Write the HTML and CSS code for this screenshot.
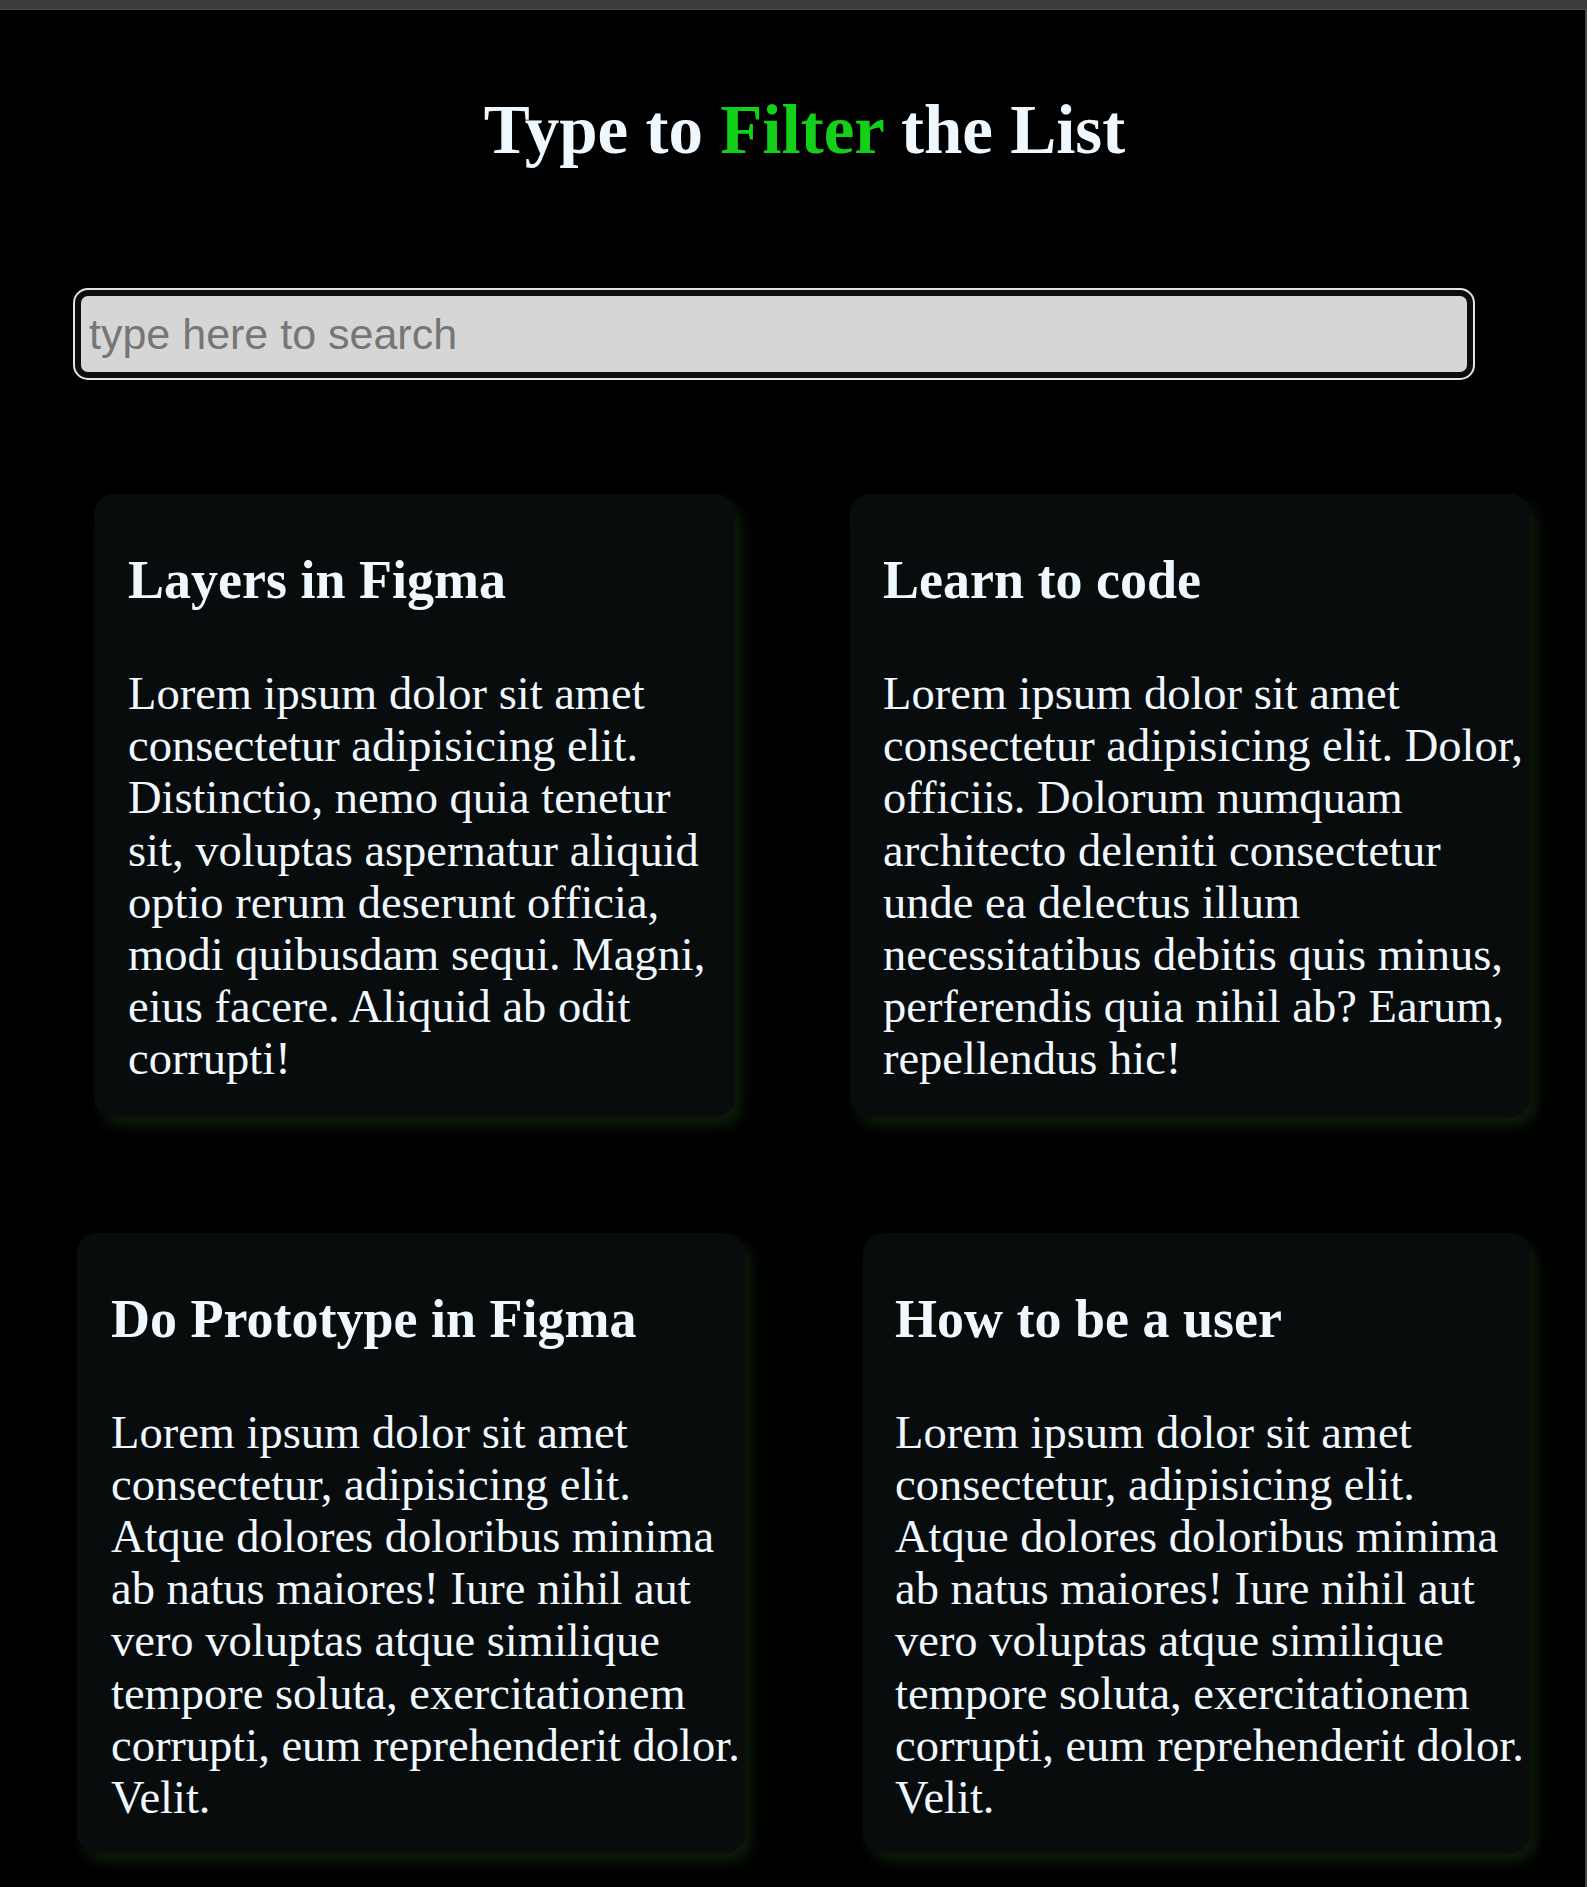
FILE: index.html
```html
<!DOCTYPE html>
<html lang="en">
<head>
<meta charset="utf-8">
<title>Type to Filter the List</title>
<link rel="stylesheet" href="styles.css">
</head>
<body>
<div class="topbar"></div>
<main class="page">
  <h1 class="title">Type to <span class="accent">Filter</span> the List</h1>
  <input class="search" type="text" placeholder="type here to search">
  <section class="row row-one">
    <article class="card card-a">
      <h2 class="card-title">Layers in Figma</h2>
      <p class="card-text">Lorem ipsum dolor sit amet consectetur adipisicing elit. Distinctio, nemo quia tenetur sit, voluptas aspernatur aliquid optio rerum deserunt officia, modi quibusdam sequi. Magni, eius facere. Aliquid ab odit corrupti!</p>
    </article>
    <article class="card card-b">
      <h2 class="card-title">Learn to code</h2>
      <p class="card-text">Lorem ipsum dolor sit amet consectetur adipisicing elit. Dolor, officiis. Dolorum numquam architecto deleniti consectetur unde ea delectus illum necessitatibus debitis quis minus, perferendis quia nihil ab? Earum, repellendus hic!</p>
    </article>
  </section>
  <section class="row row-two">
    <article class="card card-c">
      <h2 class="card-title">Do Prototype in Figma</h2>
      <p class="card-text">Lorem ipsum dolor sit amet consectetur, adipisicing elit. Atque dolores doloribus minima ab natus maiores! Iure nihil aut vero voluptas atque similique tempore soluta, exercitationem corrupti, eum reprehenderit dolor. Velit.</p>
    </article>
    <article class="card card-d">
      <h2 class="card-title">How to be a user</h2>
      <p class="card-text">Lorem ipsum dolor sit amet consectetur, adipisicing elit. Atque dolores doloribus minima ab natus maiores! Iure nihil aut vero voluptas atque similique tempore soluta, exercitationem corrupti, eum reprehenderit dolor. Velit.</p>
    </article>
  </section>
</main>
</body>
</html>
```
FILE: styles.css
```css
html {
  background: #000;
}

body {
  margin: 0;
  background: #000;
  color: #f0f8ff;
  font-family: "Liberation Serif", "Times New Roman", serif;
  min-height: 1887px;
}

.topbar {
  height: 9px;
  background: #3d3d3d;
  border-bottom: 1px solid #4c4c4c;
}

.page {
  border-right: 2px solid #474747;
  min-height: 1877px;
  box-sizing: border-box;
  padding-bottom: 40px;
  display: flex;
  flex-direction: column;
  align-items: flex-start;
}

.title {
  align-self: stretch;
  margin: 81px 0 0;
  padding-left: 24px;
  text-align: center;
  font-size: 69px;
  font-weight: bold;
  line-height: normal;
  color: #f0f8ff;
}

.accent {
  color: #12d118;
}

.search {
  box-sizing: border-box;
  width: 1398px;
  height: 88px;
  margin: 120px 0 0 75px;
  padding: 0 8px;
  border: 6px solid #0d0d0d;
  border-radius: 13px;
  box-shadow: 0 0 0 2px #e4e4e4;
  background: #d6d6d6;
  font-family: "Liberation Sans", Arial, sans-serif;
  font-size: 43px;
  color: #222;
  outline: none;
}

.search::placeholder {
  color: #767676;
}

.row {
  display: flex;
  align-items: stretch;
}

.row-one {
  margin-top: 116px;
  padding-left: 94px;
  gap: 115px;
}

.row-two {
  margin-top: 116px;
  padding-left: 77px;
  gap: 118px;
}

.card {
  box-sizing: border-box;
  padding: 55px 0 31px 34px;
  background: #080c0d;
  border-radius: 20px;
  box-shadow: 7px 9px 14px #0c1c0a;
}

.row-two .card {
  padding-bottom: 29px;
}

.card-a { width: 641px; }
.card-a .card-text { width: 592px; }

.card-b { width: 680px; padding-left: 33px; }
.card-b .card-text { width: 650px; }

.card-c { width: 668px; }
.card-c .card-text { width: 639px; }

.card-d { width: 667px; padding-left: 32px; }
.card-d .card-text { width: 639px; }

.card-title {
  margin: 0 0 57px;
  font-size: 54px;
  font-weight: bold;
  line-height: normal;
  color: #f0f8ff;
}

.card-text {
  margin: 0;
  font-size: 46.5px;
  line-height: 52.2px;
  color: #f0f8ff;
}
```
